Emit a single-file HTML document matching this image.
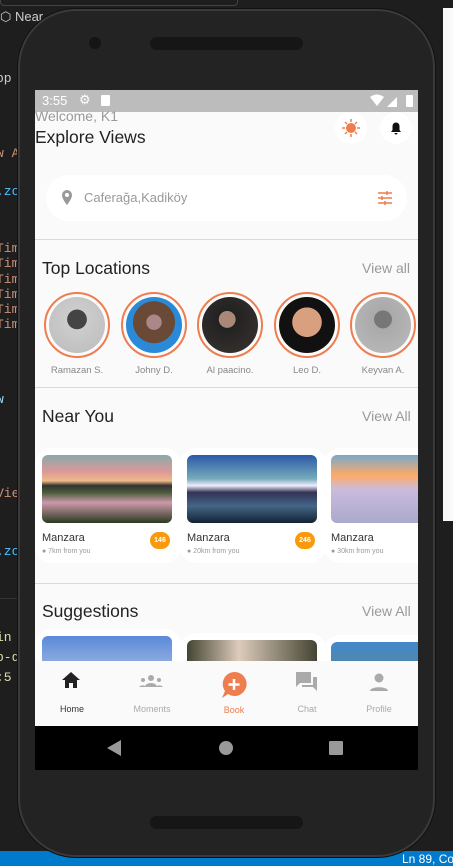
<!DOCTYPE html>
<html><head><meta charset="utf-8"><style>
*{margin:0;padding:0;box-sizing:border-box}
body{width:453px;height:866px;background:#1e1e1e;position:relative;overflow:hidden;font-family:"Liberation Sans",sans-serif}
.code{position:absolute;font-family:"Liberation Mono",monospace;font-size:13px;left:-4px}
.phone{position:absolute;left:18px;top:9px;width:417px;height:848px;background:#232323;border-radius:58px;border:2px solid #3a3a3a;box-shadow:0 0 0 1px #111}
.screen{position:absolute;left:35px;top:90px;width:383px;height:680px;background:#fafafa;overflow:hidden}
.abs{position:absolute;white-space:nowrap}
.sb{left:0;top:0;width:383px;height:22px;background:#bcbcbc;color:#fff;font-size:13px}
.h{font-size:17.5px;color:#222}
.va{font-size:14px;color:#999}
.av{width:66px;height:66px;border-radius:50%;border:2px solid #ee7d4f;padding:3px}
.av div{width:100%;height:100%;border-radius:50%}
.nm{font-size:9.5px;color:#888;width:80px;text-align:center}
.card{width:146px;height:115px;background:#fff;border-radius:16px}
.img{position:absolute;left:7px;top:7px;width:130px;height:68px;border-radius:6px}
.ct{position:absolute;left:7px;top:84px;font-size:11px;color:#333}
.cs{position:absolute;left:7px;top:100px;font-size:7px;color:#999}
.bd{position:absolute;left:115px;top:84px;width:20px;height:17px;border-radius:9px;background:#f99a0d;color:#fff;font-size:7px;text-align:center;line-height:17px;font-weight:bold}
.div{left:0;width:383px;height:1px;background:#d8d8dc}
.nl{font-size:9px;color:#aaa;text-align:center;width:70px}
</style></head><body>
<div class="abs" style="left:0;top:0;width:238px;height:6px;border:1px solid #444;border-top:none;border-radius:0 0 4px 4px"></div>
<div class="abs" style="left:0;top:9px;font-size:13px;color:#ccc">&#x2B21; Near</div>
<div class="code" style="top:71px;color:#ccc">pp</div>
<div class="code" style="top:146px;color:#ce9178">w A</div>
<div class="code" style="top:184px;color:#4fc1ff">.zo</div>
<div class="code" style="top:241px;color:#ce9178">Tim</div>
<div class="code" style="top:256px;color:#ce9178">Tim</div>
<div class="code" style="top:272px;color:#ce9178">Tim</div>
<div class="code" style="top:287px;color:#ce9178">Tim</div>
<div class="code" style="top:302px;color:#ce9178">Tim</div>
<div class="code" style="top:317px;color:#ce9178">Tim</div>
<div class="code" style="top:392px;color:#9cdcfe">w</div>
<div class="code" style="top:486px;color:#ce9178">Vie</div>
<div class="code" style="top:544px;color:#4fc1ff">.zo</div>
<div class="abs" style="left:0;top:598px;width:30px;height:1px;background:#333"></div>
<div class="code" style="top:630px;color:#dcdcaa">in</div>
<div class="code" style="top:650px;color:#dcdcaa">p-d</div>
<div class="code" style="top:670px;color:#dcdcaa">:5</div>
<div class="abs" style="left:443px;top:8px;width:10px;height:513px;background:#fafafa"></div>
<div class="abs" style="left:0;top:851px;width:453px;height:15px;background:#007acc;color:#fff;font-size:12px;overflow:hidden"><span style="position:absolute;left:402px;top:1px;white-space:nowrap">Ln 89, Col</span></div>
<div class="phone"></div>
<div class="abs" style="left:89px;top:37px;width:12px;height:12px;border-radius:50%;background:#151515"></div>
<div class="abs" style="left:150px;top:37px;width:153px;height:13px;border-radius:7px;background:#161616"></div>
<div class="abs" style="left:150px;top:816px;width:153px;height:13px;border-radius:7px;background:#161616"></div>
<div class="screen">
 <div class="abs sb"><span style="position:absolute;left:7px;top:3px">3:55</span>
  <span style="position:absolute;left:44px;top:2px;font-size:13px">&#x2699;</span>
  <div class="abs" style="left:66px;top:5px;width:9px;height:11px;background:#fff;border-radius:1px"></div>
  <svg class="abs" style="left:335px;top:4px" width="44" height="14"><path d="M0 3 Q7-2 14 3 L7 12Z" fill="#fff"/><path d="M17 13 L27 3 V13Z" fill="#fff"/><rect x="36" y="1" width="7" height="12" rx="1" fill="#fff"/></svg>
 </div>
 <div class="abs" style="left:0;top:18px;font-size:14px;color:#999">Welcome, K1</div>
 <div class="abs h" style="left:0;top:37px">Explore Views</div>
 <div class="abs" style="left:300px;top:22px;width:32px;height:32px;border-radius:50%;background:#fff"><svg width="32" height="32"><circle cx="16" cy="16" r="5" fill="#ee7d4f"/><g stroke="#ee7d4f" stroke-width="1.5"><path d="M16 7v3M16 22v3M7 16h3M22 16h3M10 10l2 2M20 20l2 2M10 22l2-2M20 12l2-2"/></g></svg></div>
 <div class="abs" style="left:345px;top:22px;width:32px;height:32px;border-radius:50%;background:#fff"><svg width="32" height="32"><path d="M11 20h10l-1.5-2v-4a3.5 3.5 0 0 0-7 0v4z M14.5 21h3a1.5 1.5 0 0 1-3 0z" fill="#111"/></svg></div>
 <div class="abs" style="left:11px;top:85px;width:361px;height:46px;border-radius:23px;background:#fff">
  <svg class="abs" style="left:15px;top:15px" width="12" height="16"><path d="M6 0a5 5 0 0 0-5 5c0 4 5 10 5 10s5-6 5-10a5 5 0 0 0-5-5zm0 7a2 2 0 1 1 0-4 2 2 0 0 1 0 4z" fill="#999"/></svg>
  <span class="abs" style="left:38px;top:15px;font-size:13px;color:#999">Caferağa,Kadiköy</span>
  <svg class="abs" style="left:332px;top:16px" width="14" height="14" stroke="#ee7d4f" stroke-width="1.5"><path d="M0 2h14M0 7h14M0 12h14"/><path d="M9 0v4M4 5v4M7 10v4"/></svg>
 </div>
 <div class="abs div" style="top:149px"></div>
 <div class="abs h" style="left:7px;top:168px">Top Locations</div>
 <div class="abs va" style="left:327px;top:170px">View all</div>
 <div class="abs av" style="left:9px;top:202px"><div style="background:radial-gradient(circle at 50% 40%,#444 0 22%,#ccc 23%,#bbb)"></div></div>
 <div class="abs av" style="left:86px;top:202px"><div style="background:radial-gradient(circle at 50% 45%,#a88 0 18%,#6a4a36 19% 50%,#2a8ad8 51%)"></div></div>
 <div class="abs av" style="left:162px;top:202px"><div style="background:radial-gradient(circle at 45% 40%,#a87 0 18%,#222 19%,#3a3430)"></div></div>
 <div class="abs av" style="left:239px;top:202px"><div style="background:radial-gradient(circle at 50% 45%,#d9a080 0 35%,#111 36%)"></div></div>
 <div class="abs av" style="left:315px;top:202px"><div style="background:radial-gradient(circle at 50% 40%,#777 0 20%,#aaa 21%,#bbb)"></div></div>
 <div class="abs nm" style="left:2px;top:275px">Ramazan S.</div>
 <div class="abs nm" style="left:79px;top:275px">Johny D.</div>
 <div class="abs nm" style="left:155px;top:275px">Al paacino.</div>
 <div class="abs nm" style="left:232px;top:275px">Leo D.</div>
 <div class="abs nm" style="left:308px;top:275px">Keyvan A.</div>
 <div class="abs div" style="top:297px"></div>
 <div class="abs h" style="left:7px;top:316px">Near You</div>
 <div class="abs va" style="left:327px;top:318px">View All</div>
 <div class="abs card" style="left:0;top:358px"><div class="img" style="background:linear-gradient(#8aa 0%,#d99 25%,#eb8 38%,#333 45%,#4a5a3a 55%,#c9a 70%,#2a3a20 100%)"></div><div class="ct">Manzara</div><div class="cs">&#x25CF; 7km from you</div><div class="bd">146</div></div>
 <div class="abs card" style="left:145px;top:358px"><div class="img" style="background:linear-gradient(#2a5aa8 0%,#7ab 35%,#eef 45%,#335 55%,#468 75%,#123 100%)"></div><div class="ct">Manzara</div><div class="cs">&#x25CF; 20km from you</div><div class="bd">246</div></div>
 <div class="abs card" style="left:289px;top:358px"><div class="img" style="background:linear-gradient(#7ac 0%,#fa6 30%,#cbd 50%,#aac 100%)"></div><div class="ct">Manzara</div><div class="cs">&#x25CF; 30km from you</div></div>
 <div class="abs div" style="top:493px"></div>
 <div class="abs h" style="left:7px;top:511px">Suggestions</div>
 <div class="abs va" style="left:327px;top:513px">View All</div>
 <div class="abs" style="left:0;top:539px;width:146px;height:40px;background:#fff;border-radius:16px"><div class="img" style="background:linear-gradient(#5a8ad8,#dde)"></div></div>
 <div class="abs" style="left:145px;top:543px;width:146px;height:40px;background:#fff;border-radius:16px"><div class="img" style="background:linear-gradient(90deg,#443 0%,#dcb 40%,#443 100%)"></div></div>
 <div class="abs" style="left:289px;top:545px;width:146px;height:40px;background:#fff;border-radius:16px"><div class="img" style="background:linear-gradient(#48c,#686)"></div></div>
 <div class="abs" style="left:0;top:571px;width:383px;height:65px;background:#fafafa">
  <svg class="abs" style="left:27px;top:11px" width="18" height="16"><path d="M9 0L0 8h3v8h4v-5h4v5h4V8h3z" fill="#222"/></svg>
  <div class="abs nl" style="left:2px;top:43px;color:#333">Home</div>
  <svg class="abs" style="left:104px;top:14px" width="24" height="12" fill="#aaa"><circle cx="12" cy="3" r="3"/><circle cx="4" cy="5" r="2"/><circle cx="20" cy="5" r="2"/><path d="M6 12a6 4 0 0 1 12 0zM0 12a4 3 0 0 1 6-1v1zM24 12a4 3 0 0 0-6-1v1z"/></svg>
  <div class="abs nl" style="left:82px;top:43px">Moments</div>
  <svg class="abs" style="left:185px;top:10px" width="28" height="28"><path d="M14 1a12 12 0 1 1-6 22l-6 4 3-7A12 12 0 0 1 14 1z" fill="#ee7d4f"/><path d="M14 8v11M8.5 13.5h11" stroke="#fff" stroke-width="2.5"/></svg>
  <div class="abs nl" style="left:164px;top:44px;color:#ee7d4f">Book</div>
  <svg class="abs" style="left:261px;top:11px" width="21" height="19" fill="#aaa"><path d="M0 0h15v11H4l-4 4z"/><path d="M17 5h4v14l-4-4H6v-2h11z"/></svg>
  <div class="abs nl" style="left:237px;top:43px">Chat</div>
  <svg class="abs" style="left:335px;top:12px" width="18" height="18" fill="#aaa"><circle cx="9" cy="5" r="4.5"/><path d="M0 18c0-5 18-5 18 0z"/></svg>
  <div class="abs nl" style="left:309px;top:43px">Profile</div>
 </div>
 <div class="abs" style="left:0;top:636px;width:383px;height:44px;background:#000">
  <svg class="abs" style="left:72px;top:14px" width="14" height="16"><path d="M14 0V16L0 8z" fill="#999"/></svg>
  <div class="abs" style="left:184px;top:15px;width:14px;height:14px;border-radius:50%;background:#999"></div>
  <div class="abs" style="left:294px;top:15px;width:14px;height:14px;background:#999;border-radius:1px"></div>
 </div>
</div>
</body></html>
